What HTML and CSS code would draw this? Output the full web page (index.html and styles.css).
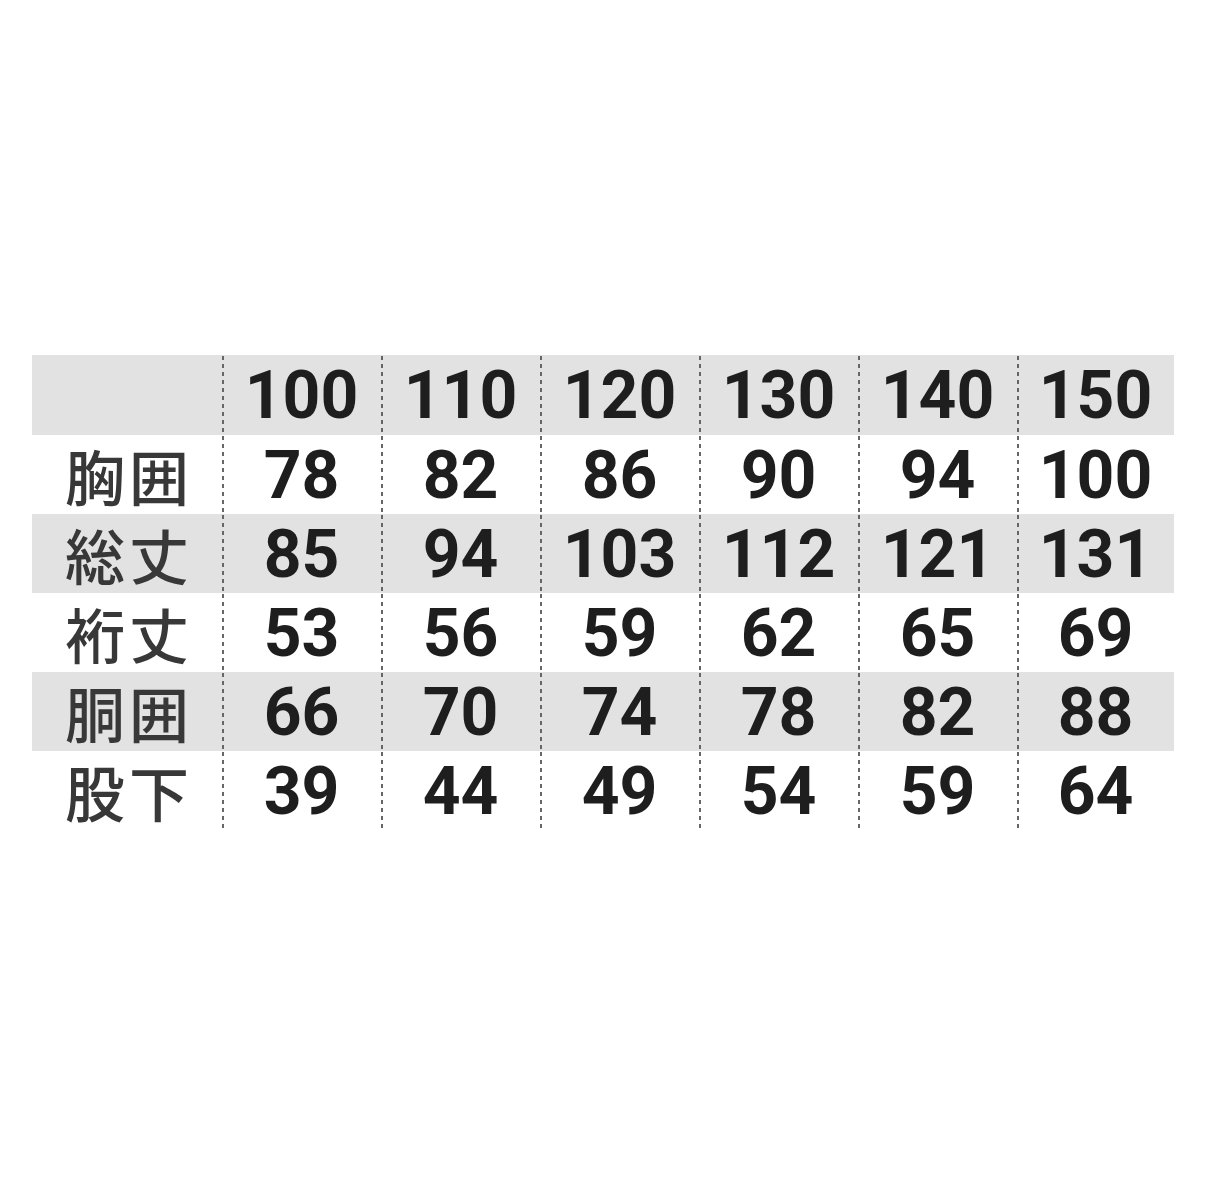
FILE: index.html
```html
<!DOCTYPE html>
<html lang="ja">
<head>
<meta charset="utf-8">
<title>サイズ表</title>
<link rel="stylesheet" href="styles.css">
</head>
<body>
<div class="page">
  <div class="chart">
    <div class="row shade">
      <div class="label"></div>
      <div class="cell">100</div><div class="cell">110</div><div class="cell">120</div><div class="cell">130</div><div class="cell">140</div><div class="cell">150</div>
    </div>
    <div class="row">
      <div class="label">胸囲</div>
      <div class="cell">78</div><div class="cell">82</div><div class="cell">86</div><div class="cell">90</div><div class="cell">94</div><div class="cell">100</div>
    </div>
    <div class="row shade">
      <div class="label">総丈</div>
      <div class="cell">85</div><div class="cell">94</div><div class="cell">103</div><div class="cell">112</div><div class="cell">121</div><div class="cell">131</div>
    </div>
    <div class="row">
      <div class="label">裄丈</div>
      <div class="cell">53</div><div class="cell">56</div><div class="cell">59</div><div class="cell">62</div><div class="cell">65</div><div class="cell">69</div>
    </div>
    <div class="row shade">
      <div class="label">胴囲</div>
      <div class="cell">66</div><div class="cell">70</div><div class="cell">74</div><div class="cell">78</div><div class="cell">82</div><div class="cell">88</div>
    </div>
    <div class="row">
      <div class="label">股下</div>
      <div class="cell">39</div><div class="cell">44</div><div class="cell">49</div><div class="cell">54</div><div class="cell">59</div><div class="cell">64</div>
    </div>
  </div>
</div>
</body>
</html>
```

FILE: styles.css
```css
html, body {
  margin: 0;
  padding: 0;
  background: #ffffff;
}

.page {
  width: 1206px;
  height: 1185px;
  padding: 355px 0 0 32px;
  box-sizing: border-box;
}

.chart {
  display: flex;
  flex-direction: column;
  width: 1142px;
}

.row {
  display: grid;
  grid-template-columns: 190px repeat(5, 159px) 157px;
  height: 79px;
}

.row:first-child {
  height: 80px;
}

.row.shade {
  background-color: #e2e2e2;
}

.label {
  display: flex;
  align-items: center;
  justify-content: center;
  font-family: "Noto Sans CJK JP", "Noto Sans", sans-serif;
  font-weight: 500;
  font-size: 60px;
  line-height: 1;
  letter-spacing: 4px;
  color: #383838;
  padding-left: 4px;
}

.cell {
  display: flex;
  align-items: center;
  justify-content: center;
  font-family: Roboto, "Liberation Sans", sans-serif;
  font-weight: 700;
  font-size: 66px;
  line-height: 1;
  color: #1e1e1e;
  padding-top: 2px;
  background-image: linear-gradient(to bottom, #666666 50%, transparent 50%);
  background-size: 4px 8px;
  background-repeat: repeat-y;
  background-position: -2px 1px;
}
```
